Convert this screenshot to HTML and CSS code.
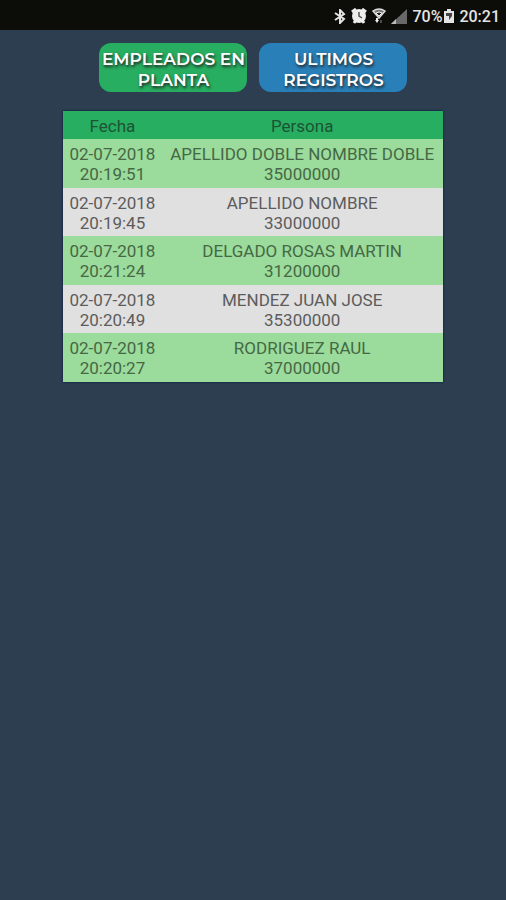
FILE: index.html
```html
<!DOCTYPE html>
<html lang="es">

<head>
    <meta charset="UTF-8">
    <meta name="viewport" content="width=device-width, initial-scale=1.0">
    <title>Empleados en planta</title>
    <link rel="stylesheet" href="styles.css">
</head>

<body>
    <header class="status-bar">
        <svg class="bluetooth" width="12" height="15" viewBox="0 0 12 15">
            <path d="M1 4l9 6-4 4V1l4 4-9 6" fill="none" stroke="#e4e4e4" stroke-width="2" />
        </svg>
        <svg class="alarm" width="16" height="16" viewBox="0 0 16 16">
            <path d="M1 4l4-3M15 4l-4-3M3 15l2-3M13 15l-2-3" stroke="#eee" stroke-width="3" />
            <circle cx="8" cy="8" r="7" fill="#eee" />
            <path d="M8 4v4l3 2" fill="none" stroke="#555" stroke-width="1.5" />
        </svg>
        <svg class="wifi" width="14" height="16" viewBox="0 0 14 16">
            <path d="M1 3Q7 -1 13 3L7 10z" fill="#777" stroke="#ddd" stroke-width="1.5" />
            <path d="M4 5Q7 3 10 5L7 8z" fill="#222" stroke="#eee" stroke-width="1" />
            <path d="M5 10v2" stroke="#eee" stroke-width="2" />
            <path d="M3 12h4l-2 3z" fill="#eee" />
            <path d="M9 12v3" stroke="#888" stroke-width="1" />
        </svg>
        <svg class="signal" width="16" height="15" viewBox="0 0 16 15">
            <path d="M16 0v15H0z" fill="#686868" />
            <path d="M5 10v5H0z" fill="#bbb" />
        </svg>
        <span class="percent">70%</span>
        <svg class="battery" width="10" height="14" viewBox="0 0 10 14">
            <path d="M3 0h4v2h3v12H0V2h3z" fill="#e4e4e4" />
            <path d="M2 4h6v3l-3 4V7H2z" fill="#444" />
        </svg>
        <span class="clock">20:21</span>
    </header>

    <main class="container">
        <nav class="botones">
            <button type="button" class="boton empleados">EMPLEADOS EN PLANTA</button>
            <button type="button" class="boton registros">ULTIMOS REGISTROS</button>
        </nav>

        <table>
            <thead>
                <tr>
                    <th>Fecha</th>
                    <th>Persona</th>
                </tr>
            </thead>
            <tbody>
                <tr>
                    <td>02-07-2018<br>20:19:51</td>
                    <td>APELLIDO DOBLE NOMBRE DOBLE<br>35000000</td>
                </tr>
                <tr>
                    <td>02-07-2018<br>20:19:45</td>
                    <td>APELLIDO NOMBRE<br>33000000</td>
                </tr>
                <tr>
                    <td>02-07-2018<br>20:21:24</td>
                    <td>DELGADO ROSAS MARTIN<br>31200000</td>
                </tr>
                <tr>
                    <td>02-07-2018<br>20:20:49</td>
                    <td>MENDEZ JUAN JOSE<br>35300000</td>
                </tr>
                <tr>
                    <td>02-07-2018<br>20:20:27</td>
                    <td>RODRIGUEZ RAUL<br>37000000</td>
                </tr>
            </tbody>
        </table>
    </main>
</body>

</html>
```

FILE: styles.css
```css
* {
    box-sizing: border-box;
}

body {
    margin: 0;
    min-height: 100vh;
    background-color: #2c3e50;
    font-family: Roboto, sans-serif;
}

.status-bar {
    height: 30px;
    padding: 2px 6px 0 0;
    display: flex;
    justify-content: flex-end;
    align-items: center;
    background-color: #0c0d08;
    color: #e4e4e4;
    font-size: 16px;
    font-weight: 500;
}

.alarm,
.wifi,
.signal,
.percent,
.clock {
    margin-left: 5px;
}

.battery {
    margin-left: 2px;
}

.container {
    display: flex;
    flex-direction: column;
    align-items: center;
    padding-top: 13px;
}

.botones {
    display: flex;
    gap: 12px;
    margin-bottom: 19px;
}

.boton {
    width: 148px;
    height: 49px;
    padding: 5px 0 0 1px;
    border: none;
    border-radius: 12px;
    color: #fff;
    font-family: Montserrat, Inter, sans-serif;
    font-size: 17px;
    font-weight: 600;
    line-height: 21px;
    text-shadow: 1px 2px 3px #222;
}

.empleados {
    background-color: #27ae60;
}

.registros {
    background-color: #2980b9;
}

table {
    width: 75%;
    border-collapse: collapse;
    box-shadow: 0 0 2px #001040;
    color: #5c5c5c;
    font-size: 17px;
    line-height: 20px;
    text-align: center;
}

th {
    padding: 5px 5px 3px;
    background-color: #27ae60;
    color: #1c5334;
    font-weight: 400;
}

td {
    padding: 5px 5px 3px;
    background-color: #e0e0e0;
    white-space: nowrap;
}

tbody tr:nth-child(odd) td {
    padding-bottom: 4px;
    background-color: #9bdb9b;
    color: #456845;
}
```
